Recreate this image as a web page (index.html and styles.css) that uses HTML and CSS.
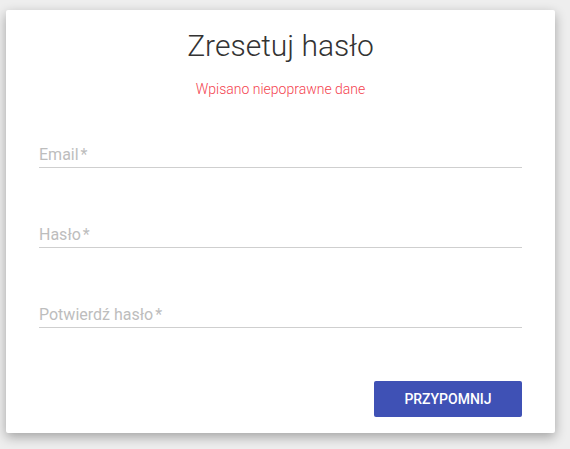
FILE: index.html
```html
<!DOCTYPE html>
<html lang="pl">
<head>
<meta charset="utf-8">
<title>Zresetuj hasło</title>
<link rel="stylesheet" href="styles.css">
</head>
<body>
<div class="card">
  <h1 class="title">Zresetuj hasło</h1>
  <p class="error">Wpisano niepoprawne dane</p>
  <form class="form">
    <div class="field"><label class="label">Email<span class="req">*</span></label></div>
    <div class="field"><label class="label">Hasło<span class="req">*</span></label></div>
    <div class="field"><label class="label">Potwierdź hasło<span class="req">*</span></label></div>
    <div class="actions"><button type="button" class="btn">Przypomnij</button></div>
  </form>
</div>
</body>
</html>
```

FILE: styles.css
```css
html, body {
  margin: 0;
  padding: 0;
}
body {
  background: #eeeeee;
  font-family: Roboto, "Liberation Sans", sans-serif;
  height: 449px;
  overflow: hidden;
}
.card {
  margin: 10px 0 0 6px;
  width: 549px;
  box-sizing: border-box;
  background: #fff;
  border-radius: 2px;
  box-shadow: 0 4px 12px rgba(0, 0, 0, 0.32);
  padding: 18px 33px 16px 33px;
  display: flex;
  flex-direction: column;
}
.title {
  margin: 0;
  font-size: 30px;
  line-height: 36px;
  font-weight: 300;
  color: #333;
  text-align: center;
}
.error {
  margin: 15px 0 0;
  font-size: 14px;
  line-height: 20px;
  font-weight: 300;
  color: #f4434f;
  text-align: center;
}
.form {
  margin: 46px 0 0;
  display: flex;
  flex-direction: column;
  gap: 57px;
}
.field {
  border-bottom: 1px solid #cfcfcf;
  padding-bottom: 2px;
}
.label {
  display: block;
  font-size: 16px;
  line-height: 20px;
  color: #bdbdbd;
}
.req {
  margin-left: 2px;
}
.actions {
  display: flex;
  justify-content: flex-end;
  margin-top: -4px;
}
.btn {
  width: 148px;
  height: 36px;
  border: none;
  border-radius: 2px;
  background: #3f51b5;
  color: #fff;
  font-family: Roboto, "Liberation Sans", sans-serif;
  font-size: 14px;
  font-weight: 500;
  text-transform: uppercase;
  padding: 0;
}
```
